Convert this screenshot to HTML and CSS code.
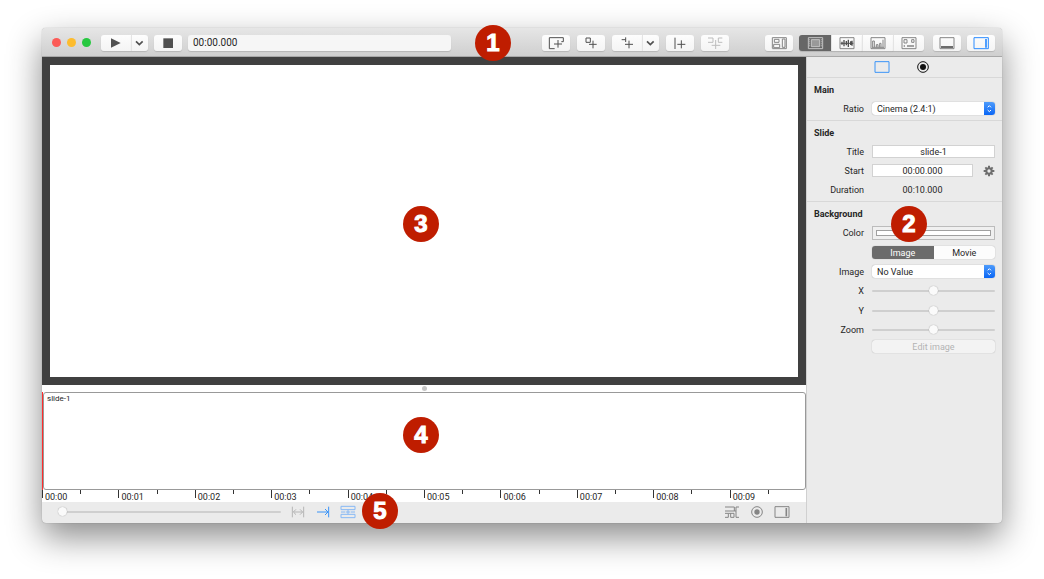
FILE: index.html
```html
<!DOCTYPE html>
<html lang="en">
<head>
  <meta charset="UTF-8">
  <meta name="viewport" content="width=device-width, initial-scale=1.0">
  <title>slide-1</title>
  <link rel="stylesheet" href="styles.css">
</head>
<body>
  <main class="window">
    <header class="toolbar">
      <div class="lights">
        <button class="light red" aria-label="Close"></button>
        <button class="light yellow" aria-label="Minimize"></button>
        <button class="light green" aria-label="Zoom window"></button>
      </div>

      <div class="group play">
        <button class="btn medium" aria-label="Play"><svg viewBox="0 0 90 48"><path class="solid" d="M30 10L59 24L30 38Z"/></svg></button>
        <button class="btn narrow" aria-label="Play options"><svg viewBox="0 0 51 48"><path class="thick" d="M12 19L22 29L32 19"/></svg></button>
      </div>
      <button class="btn" aria-label="Stop"><svg viewBox="0 0 84 48"><path class="solid" d="M28 10H57V39H28Z"/></svg></button>
      <input class="time" type="text" value="00:00.000" aria-label="Current time">

      <div class="tools">
        <button class="btn" aria-label="Add slide"><svg viewBox="0 0 84 48"><path d="M38 41H22V8H64V20H58M48 15V38M36 27H60"/></svg></button>
        <button class="btn" aria-label="Add object"><svg viewBox="0 0 84 48"><path d="M27 9H40V22H27ZM48 17V40M36 28H59"/></svg></button>
        <div class="group">
          <button class="btn medium" aria-label="Add transition"><svg viewBox="0 0 90 48"><path d="M29 14H41M41 7V21M51 17V40M39 28H63"/></svg></button>
          <button class="btn narrow" aria-label="Transition options"><svg viewBox="0 0 51 48"><path class="thick" d="M12 19L22 29L32 19"/></svg></button>
        </div>
        <button class="btn" aria-label="Add marker"><svg viewBox="0 0 84 48"><path d="M27 8V42M46 16V40M34 28H58"/></svg></button>
        <button class="btn faded" aria-label="Join" disabled><svg viewBox="0 0 84 48"><path d="M21 9H36V22H21M64 9H52V22H64M44 15V42M32 31H58"/></svg></button>
      </div>

      <button class="btn" aria-label="Library"><svg viewBox="0 0 84 48"><path class="gray" d="M22 40V8H64V41H22M28 13H42V22H28ZM26 28H44V38H26ZM52 12H60V37H52Z"/></svg></button>
      <div class="group views">
        <button class="btn view dark" aria-label="Slide view"><svg viewBox="0 0 96 48"><path d="M28 8H71V41H28Z"/><path class="fill" d="M37 14H62V35H37Z"/><path class="dots" d="M32 13V37M67 13V37"/></svg></button>
        <button class="btn view" aria-label="Audio view"><svg viewBox="0 0 93 48"><path class="gray" d="M24 8H66V41H24Z"/><path d="M26 25H64"/><path class="wave" d="M30 20V29M36 15V34M43 18V31M49 14V36M56 19V30M60 17V32"/></svg></button>
        <button class="btn view" aria-label="Chart view"><svg viewBox="0 0 93 48"><path class="gray" d="M24 8H66V41H24Z"/><path class="gray" d="M29 37V18H34V37M40 37V29H45V37M50 37V25H54V37M60 37V14M27 37H63"/></svg></button>
        <button class="btn view" aria-label="Grid view"><svg viewBox="0 0 93 48"><path class="gray" d="M24 8H66V41H24ZM30 14H39V24H30ZM53 14H60V22H53Z"/><path class="gray bar" d="M39 33H60M29 33H33"/></svg></button>
      </div>
      <button class="btn" aria-label="Toggle timeline"><svg viewBox="0 0 84 48"><path class="gray" d="M21 8H63V41H21Z"/><path class="bar" d="M24 36H60"/></svg></button>
      <button class="btn blue" aria-label="Toggle inspector"><svg viewBox="0 0 84 48"><path d="M21 8H64V41H21Z"/><path class="bar" d="M57 12V38"/></svg></button>
      <span class="badge badge-1">1</span>
    </header>

    <div class="content">
      <section class="editor">
        <div class="preview">
          <div class="canvas"></div>
          <span class="badge badge-3">3</span>
        </div>
        <div class="splitter"></div>
        <div class="timeline">
          <div class="slide">slide-1</div>
          <span class="badge badge-4">4</span>
        </div>
        <div class="ruler">
          <span class="major">00:00</span><span class="minor"></span>
          <span class="major">00:01</span><span class="minor"></span>
          <span class="major">00:02</span><span class="minor"></span>
          <span class="major">00:03</span><span class="minor"></span>
          <span class="major">00:04</span><span class="minor"></span>
          <span class="major">00:05</span><span class="minor"></span>
          <span class="major">00:06</span><span class="minor"></span>
          <span class="major">00:07</span><span class="minor"></span>
          <span class="major">00:08</span><span class="minor"></span>
          <span class="major">00:09</span><span class="minor"></span>
        </div>
        <footer class="statusbar">
          <input class="slider scale" type="range" min="0" max="100" value="0" aria-label="Timeline scale">
          <button class="icon light-gray" aria-label="Fit"><svg viewBox="0 0 48 48"><path d="M7 8V40M41 8V40M11 24H37M18 16L10 24L18 32M30 16L38 24L30 32"/></svg></button>
          <button class="icon azure" aria-label="Follow"><svg viewBox="0 0 48 48"><path d="M6 24H38M30 15L39 24L30 33M41 8V40"/></svg></button>
          <button class="icon sky" aria-label="Snap"><svg viewBox="0 0 48 48"><path d="M3 7V17H45V7ZM3 41V31H45V41ZM24 17V31M3 24H16M32 24H45M18 24H30"/></svg></button>
          <div class="right-icons">
            <button class="icon" aria-label="Tracks"><svg viewBox="0 0 48 48"><path d="M3 9H31V21H3M45 9H36V40H45M3 40H13V28H3M13 28H30V40H20V28M31 21H36"/></svg></button>
            <button class="icon" aria-label="Record"><svg viewBox="0 0 48 48"><circle cx="24" cy="24" r="16"/><circle class="solid" cx="24" cy="24" r="8"/></svg></button>
            <button class="icon" aria-label="Side panel"><svg viewBox="0 0 48 48"><path d="M3 8H45V40H3Z"/><path class="bar" d="M37 12V37"/></svg></button>
          </div>
          <span class="badge badge-5">5</span>
        </footer>
      </section>

      <aside class="inspector">
        <nav class="tabs">
          <button class="icon azure" aria-label="Slide"><svg viewBox="0 0 48 48"><path d="M3 8H45V40H3Z"/></svg></button>
          <button class="icon black" aria-label="Record"><svg viewBox="0 0 48 48"><circle cx="24" cy="24" r="16"/><circle class="solid" cx="24" cy="24" r="9"/></svg></button>
        </nav>

        <section class="panel">
          <h2>Main</h2>
          <div class="row">
            <label for="ratio">Ratio</label>
            <div class="select">
              <select id="ratio"><option>Cinema (2.4:1)</option></select>
              <svg viewBox="0 0 33 39"><path d="M11 16L16 11L21 16M11 24L16 29L21 24"/></svg>
            </div>
          </div>
        </section>

        <section class="panel">
          <h2>Slide</h2>
          <div class="row">
            <label for="title">Title</label>
            <input class="field" id="title" type="text" value="slide-1">
          </div>
          <div class="row">
            <label for="start">Start</label>
            <div class="with-gear">
              <input class="field" id="start" type="text" value="00:00.000">
              <button class="gear" aria-label="Start settings"><svg viewBox="0 0 36 36"><circle cx="18" cy="18" r="8"/><path d="M18 2V10M18 26V34M2 18H10M26 18H34M7 7L13 13M23 23L29 29M29 7L23 13M13 23L7 29"/></svg></button>
            </div>
          </div>
          <div class="row">
            <span class="label">Duration</span>
            <div class="with-gear"><span class="value">00:10.000</span></div>
          </div>
        </section>

        <section class="panel">
          <h2>Background</h2>
          <div class="row">
            <label for="color">Color</label>
            <input class="color" id="color" type="color" value="#ffffff">
          </div>
          <div class="row">
            <div class="segmented">
              <button class="active">Image</button>
              <button>Movie</button>
            </div>
          </div>
          <div class="row">
            <label for="image">Image</label>
            <div class="select">
              <select id="image"><option>No Value</option></select>
              <svg viewBox="0 0 33 39"><path d="M11 16L16 11L21 16M11 24L16 29L21 24"/></svg>
            </div>
          </div>
          <div class="row tall">
            <label for="x">X</label>
            <input class="slider" id="x" type="range">
          </div>
          <div class="row tall">
            <label for="y">Y</label>
            <input class="slider" id="y" type="range">
          </div>
          <div class="row short">
            <label for="zoom">Zoom</label>
            <input class="slider" id="zoom" type="range">
          </div>
          <div class="row">
            <button class="edit" disabled>Edit image</button>
          </div>
          <span class="badge badge-2">2</span>
        </section>
      </aside>
    </div>
  </main>
</body>
</html>
```

FILE: styles.css
```css
* {
  box-sizing: border-box;
}

body {
  display: flex;
  min-height: 100vh;
  margin: 0;
  padding: 28px 42px 56px;
  overflow: hidden;
  background: #fff;
  color: #262626;
  font: 9px/12px Roboto, "Liberation Sans", sans-serif;
}

button,
input,
select {
  margin: 0;
  padding: 0;
  border: none;
  outline: none;
  background: none;
  color: inherit;
  font: inherit;
}

svg {
  display: block;
  height: 100%;
  fill: none;
  stroke: currentColor;
  stroke-width: 3;
}

.solid {
  fill: currentColor;
  stroke: none;
}

.thick {
  stroke-width: 5;
}

.wave {
  stroke-width: 4;
}

.bar {
  stroke-width: 5;
}

.gray {
  stroke: #858585;
}

.window {
  display: flex;
  flex: 1;
  flex-direction: column;
  min-width: 0;
  border-radius: 4px;
  background: #ebebeb;
  box-shadow: 0 0 1px rgba(0, 0, 0, 0.4), 0 14px 34px rgba(0, 0, 0, 0.46);
}

/* toolbar */
.toolbar {
  position: relative;
  display: flex;
  align-items: center;
  gap: 6px;
  height: 29px;
  padding: 1px 7px 0 10px;
  border-bottom: 1px solid #a8a8a8;
  border-radius: 4px 4px 0 0;
  background: linear-gradient(#e6e6e6, #cfcfcf);
}

.lights {
  display: flex;
  gap: 6px;
}

.light {
  width: 9px;
  height: 9px;
  border-radius: 50%;
}

.red {
  background: #fc5b57;
}

.yellow {
  background: #fdbc2e;
}

.green {
  background: #27c840;
}

.btn {
  width: 28px;
  height: 16px;
  flex: none;
  border-radius: 3px;
  background: linear-gradient(#fdfdfd, #f4f4f4);
  box-shadow: 0 1px 1px rgba(0, 0, 0, 0.14);
  color: #505050;
}

.medium {
  width: 30px;
}

.narrow {
  width: 17px;
}

.group {
  display: flex;
  flex: none;
}

.group .btn {
  border-radius: 0;
}

.group .btn:first-child {
  border-radius: 3px 0 0 3px;
}

.group .btn:last-child {
  border-radius: 0 3px 3px 0;
}

.group .btn + .btn {
  border-left: 1px solid #e4e4e4;
}

.play {
  margin-left: 4px;
}

.time {
  width: 263px;
  height: 16px;
  min-width: 60px;
  padding: 0 5px;
  border-radius: 3px;
  background: #f6f6f6;
  box-shadow: 0 1px 1px rgba(0, 0, 0, 0.14);
  font-size: 10px;
}

.tools {
  display: flex;
  gap: 7px;
  margin-left: auto;
  margin-right: 30px;
}

.views {
  margin-right: 3px;
}

.view {
  width: 31px;
}

.btn.dark {
  width: 32px;
  background: #666;
  color: #c4c4c4;
}

.dark .fill {
  fill: #999;
}

.dark .dots {
  stroke-dasharray: 3 3;
}

.faded {
  color: #bdbdbd;
}

.blue {
  color: #2d8cff;
}

/* editor */
.content {
  display: flex;
  flex: 1;
}

.editor {
  display: flex;
  flex: 1;
  flex-direction: column;
  min-width: 0;
}

.preview {
  position: relative;
  display: flex;
  flex: 1;
  padding: 8px;
  background: #404040;
}

.canvas {
  flex: 1;
  background: #fff;
}

.splitter {
  display: flex;
  align-items: center;
  justify-content: center;
  height: 7px;
  background: #fff;
}

.splitter::after {
  content: "";
  width: 5px;
  height: 5px;
  border-radius: 50%;
  background: #c6c6c6;
}

.timeline {
  position: relative;
  height: 98px;
  border-left: 1px solid #ff2d2d;
  background: #fff;
}

.slide {
  height: 100%;
  padding: 0 3px;
  border: 1px solid #999;
  border-radius: 3px;
  font-size: 8px;
}

.ruler {
  display: flex;
  height: 12px;
  background: #fff;
}

.ruler span {
  flex: 1;
  min-width: 0;
  border-left: 1px solid #333;
}

.ruler .major {
  height: 8px;
  line-height: 15px;
  text-indent: 2px;
}

.ruler .minor {
  height: 4px;
}

.statusbar {
  position: relative;
  display: flex;
  align-items: center;
  gap: 9px;
  height: 21px;
  padding: 0 16px 2px;
}

.slider {
  width: 100%;
  height: 9px;
  appearance: none;
}

.slider::-webkit-slider-runnable-track {
  height: 2px;
  border-radius: 1px;
  background: #cfcfcf;
}

.slider::-webkit-slider-thumb {
  width: 9px;
  height: 9px;
  margin-top: -4px;
  appearance: none;
  border-radius: 50%;
  background: #fafafa;
  box-shadow: 0 0 1px rgba(0, 0, 0, 0.4);
}

.scale {
  width: 223px;
}

.icon {
  width: 16px;
  height: 16px;
  flex: none;
  color: #858585;
}

.right-icons {
  display: flex;
  gap: 9px;
  margin-left: auto;
}

.light-gray {
  color: #b5b5b5;
}

.azure {
  color: #3b94f7;
}

.sky {
  color: #86b8f5;
}

.black {
  color: #111;
}

/* inspector */
.inspector {
  width: 196px;
  flex: none;
  border-left: 1px solid #d0d0d0;
}

.tabs {
  display: flex;
  align-items: center;
  justify-content: center;
  gap: 25px;
  height: 21px;
  padding-right: 5px;
  border-bottom: 1px solid #d8d8d8;
}

.panel {
  position: relative;
  display: flex;
  flex-direction: column;
  gap: 6px;
  padding: 6px 7px 5px;
  border-bottom: 1px solid #d8d8d8;
}

.panel:last-child {
  border-bottom: none;
}

h2 {
  margin: 0;
  font-size: 9px;
  font-weight: 700;
}

.row {
  display: grid;
  grid-template-columns: 50px 1fr;
  column-gap: 8px;
  align-items: center;
  min-height: 13px;
}

.tall {
  height: 14px;
}

.short {
  height: 10px;
  min-height: 0;
}

.row label,
.label {
  text-align: right;
}

.select {
  display: flex;
  height: 13px;
  overflow: hidden;
  border-radius: 3px;
  background: #fff;
  box-shadow: 0 0 1px rgba(0, 0, 0, 0.45);
}

.select select {
  flex: 1;
  min-width: 0;
  padding-left: 5px;
  appearance: none;
}

.select svg {
  width: 11px;
  background: linear-gradient(#4d9bfb, #0a66f5);
  color: #fff;
}

.field {
  width: 100%;
  min-width: 0;
  height: 13px;
  border: 1px solid #d2d2d2;
  background: #fff;
  text-align: center;
}

.with-gear {
  display: grid;
  grid-template-columns: 1fr 12px;
  column-gap: 10px;
  align-items: center;
}

.value {
  text-align: center;
}

.gear {
  height: 12px;
  color: #6e6e6e;
}

.gear svg {
  stroke-width: 6;
}

.color {
  width: 100%;
  height: 14px;
  padding: 3px;
  appearance: none;
  border: 1px solid #bcbcbc;
  background: #f0f0f0;
}

.color::-webkit-color-swatch-wrapper {
  padding: 0;
}

.color::-webkit-color-swatch {
  border: 1px solid #a0a0a0;
}

.segmented,
.edit {
  grid-column: 2;
  height: 13px;
  border-radius: 3px;
  box-shadow: 0 0 1px rgba(0, 0, 0, 0.35);
}

.segmented {
  display: flex;
  overflow: hidden;
  background: #fcfcfc;
}

.segmented button {
  flex: 1;
}

.segmented .active {
  background: #6b6b6b;
  color: #fff;
}

.edit {
  background: #f3f3f3;
  color: #b4b4b4;
}

/* numbered callouts, placed over the window */
.badge {
  position: absolute;
  z-index: 1;
  width: 36px;
  height: 36px;
  border-radius: 50%;
  background: #bf1d00;
  color: #fff;
  font: bold 24px/36px "Liberation Sans", Arial, sans-serif;
  text-align: center;
  -webkit-text-stroke: 1px #fff;
}

.badge-1 {
  top: -3px;
  left: 433px;
}

.badge-2 {
  top: 4px;
  left: 84px;
}

.badge-3 {
  top: 149px;
  left: 361px;
}

.badge-4 {
  top: 25px;
  left: 360px;
}

.badge-5 {
  top: -9px;
  left: 320px;
}
```
